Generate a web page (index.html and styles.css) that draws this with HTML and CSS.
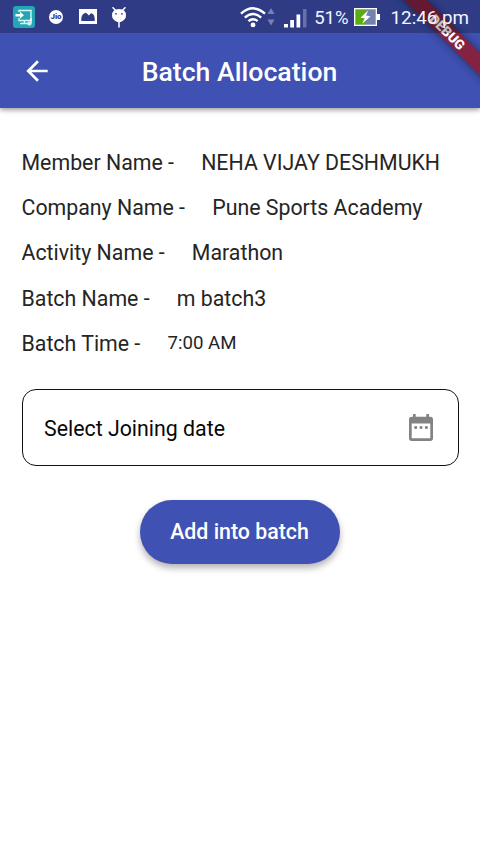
FILE: index.html
```html
<!DOCTYPE html>
<html lang="en">
<head>
<meta charset="utf-8">
<title>Batch Allocation</title>
<link rel="stylesheet" href="styles.css">
</head>
<body>
<div class="screen">
  <header class="appbar">
    <svg class="back" viewBox="0 0 24 24" width="32" height="32"><path fill="#fff" d="M20 11H7.83l5.59-5.59L12 4l-8 8 8 8 1.41-1.41L7.83 13H20z"/></svg>
    <h1 class="title">Batch Allocation</h1>
  </header>
  <main class="content">
    <dl class="details">
      <div class="row"><dt>Member Name -</dt><dd>NEHA VIJAY DESHMUKH</dd></div>
      <div class="row"><dt>Company Name -</dt><dd>Pune Sports Academy</dd></div>
      <div class="row"><dt>Activity Name -</dt><dd>Marathon</dd></div>
      <div class="row"><dt>Batch Name -</dt><dd>m batch3</dd></div>
      <div class="row"><dt>Batch Time -</dt><dd class="time">7:00 AM</dd></div>
    </dl>
    <div class="date-field">
      <span>Select Joining date</span>
      <svg viewBox="0 0 24 27" width="24" height="27"><path fill="#838383" fill-rule="evenodd" d="M4 0H6.7V2.7H17.3V0H20V2.7H21.3Q24 2.7 24 5.4V24.3Q24 27 21.3 27H2.7Q0 27 0 24.3V5.4Q0 2.7 2.7 2.7H4ZM2.7 9.6V24.3H21.3V9.6Z"/><path fill="#777" d="M5.3 12.3H8V14.8H5.3ZM10.7 12.3H13.3V14.8H10.7ZM16 12.3H18.7V14.8H16Z"/></svg>
    </div>
    <button class="submit" type="button">Add into batch</button>
  </main>
  <div class="banner">DEBUG</div>
  <div class="statusbar">
    <div class="notifications">
      <svg width="22" height="22" viewBox="0 0 22 22">
        <rect width="22" height="22" rx="3" fill="#25a6b5"/>
        <path d="M6 6V4.5H18V14.5H6V12M7 17.5H15M11.5 14.5V17.5" fill="none" stroke="#d4f7f8" stroke-width="1.4"/>
        <path d="M2.5 8H7V5.8L11 9.2L7 12.6V10.4H2.5Z" fill="#fff"/>
        <path d="M18 12V17.5" stroke="#fff" stroke-width="1.3"/><circle cx="16.4" cy="17.4" r="2.2" fill="#c8f2ef"/>
      </svg>
      <span class="jio">Jio</span>
      <svg width="18" height="15" viewBox="0 0 18 15"><path fill="#fff" fill-rule="evenodd" d="M0 0H18V15H0ZM2.3 12H15.7V9Q15.5 5.5 12.8 4.3Q11.5 4.3 9.8 6.5Q8 3.7 6 3.8Q3 5.2 2.3 9Z"/></svg>
      <svg class="android" width="16" height="21" viewBox="0 0 16 21"><path d="M2 .7L4.4 3.2M14 .7L11.6 3.2M8 14V20" stroke="#fff" stroke-width="1.5" stroke-linecap="round"/><path d="M1 8.5Q1 2 8 2T15 8.5Q15 12 11.2 14.2Q9.5 15.3 8 15.3T4.8 14.2Q1 12 1 8.5Z" fill="#fff"/><circle cx="5" cy="6.8" r=".9" fill="#2f3d88"/><circle cx="11" cy="6.8" r=".9" fill="#2f3d88"/></svg>
    </div>
    <div class="system">
      <svg class="wifi" width="26" height="22" viewBox="0 0 26 22"><g fill="none" stroke="#fff" stroke-width="2.4"><path d="M1 7.7Q13-3 25 7.7"/><path d="M4.8 11.6Q13 4.2 21.2 11.6"/><path d="M8.4 15.2Q13 11.2 17.6 15.2"/></g><circle cx="13" cy="18.9" r="2.4" fill="#fff"/></svg>
      <svg class="traffic" width="8" height="18" viewBox="0 0 8 18"><path fill="#7880b4" d="M.5 6L4 0L7.5 6ZM.5 11.5H7.5L4 17.5Z"/></svg>
      <svg class="signal" width="23" height="20" viewBox="0 0 23 20"><path fill="#fff" d="M0 16H4V19.5H0ZM6.2 12H10V19.5H6.2ZM12.5 6.5H16.2V19.5H12.5Z"/><path fill="#6871aa" d="M19 1H22.5V19.5H19Z"/></svg>
      <span class="percent">51%</span>
      <svg class="battery" width="26" height="18" viewBox="0 0 26 18"><path fill="#fff" d="M0 0H23V6H26V12H23V18H0Z"/><path fill="#59ad13" d="M1.3 1.3H12V16.7H1.3Z"/><path fill="#7482b0" d="M12 1.3H21.7V16.7H12Z"/><path fill="#fff" d="M14.2 2.2L6.5 9.8L10.7 10.3L8.2 15.8L16.5 8.2L12 7.5Z"/></svg>
      <span class="clock">12:46 pm</span>
    </div>
  </div>
</div>
</body>
</html>
```
FILE: styles.css
```css
* { box-sizing: border-box; }
body { margin: 0; font-family: Roboto, "Liberation Sans", sans-serif; }
.screen {
  position: relative;
  width: 480px;
  height: 853px;
  overflow: hidden;
  background: #fff;
}
.appbar {
  display: flex;
  align-items: center;
  height: 108px;
  padding: 34px 21px 0;
  background: #3f51b2;
  box-shadow: 0 2px 5px rgba(0, 0, 0, .4);
}
.back { flex: none; }
.title {
  flex: 1;
  margin: 2px 33px 0 0;
  color: #fff;
  font-size: 26.67px;
  font-weight: 500;
  text-align: center;
}
.content {
  display: flex;
  flex-direction: column;
  padding: 31.6px 21px 0;
}
.details { margin: 0 0 0 .5px; }
.row {
  display: flex;
  align-items: center;
  gap: 27.2px;
  height: 45.3px;
  color: #252525;
  font-size: 21.33px;
  white-space: nowrap;
}
.row dd { margin: 0; }
.row .time { font-size: 18.67px; }
.date-field {
  display: flex;
  align-items: center;
  justify-content: space-between;
  height: 77px;
  margin: 22.9px 0 0 .5px;
  padding: 0 25.5px 0 21.5px;
  border: 1.5px solid #111;
  border-radius: 14px;
  color: #080808;
  font-size: 21.33px;
}
.date-field span { padding-top: 2px; }
.submit {
  align-self: center;
  width: 200px;
  height: 64px;
  margin-top: 34px;
  padding: 0 1px 0 0;
  border: 0;
  border-radius: 32px;
  background: #3f51b2;
  box-shadow: 0 4px 7px rgba(0, 0, 0, .3);
  color: #fff;
  font: 500 21.33px Roboto, "Liberation Sans", sans-serif;
}
.banner {
  position: absolute;
  top: 23.5px;
  left: 377px;
  width: 141px;
  height: 16px;
  transform: rotate(45deg);
  background: rgba(146, 24, 42, .82);
  box-shadow: 0 0 8px rgba(0, 0, 0, .45);
  color: #fff;
  font-size: 13.6px;
  font-weight: 900;
  line-height: 16px;
  text-align: center;
}
.statusbar {
  position: absolute;
  inset: 0 0 auto;
  display: flex;
  justify-content: space-between;
  height: 33px;
  padding: 0 11px 0 13px;
  background: rgba(0, 0, 0, .25);
  color: #f4f5ff;
}
.notifications, .system { display: flex; align-items: center; }
.notifications { gap: 14px; }
.android { margin: 1px 0 0; }
.jio {
  width: 14px;
  height: 14px;
  margin-right: 2px;
  border-radius: 50%;
  background: #fff;
  color: #2f3d88;
  font-size: 8px;
  font-weight: 900;
  line-height: 14px;
  text-align: center;
}
.traffic { margin-left: 1px; }
.signal { margin: 3px 7px 0 9px; }
.percent { font-size: 18.5px; }
.battery { margin: 1px 11px 0 5px; }
.clock { font-size: 18.8px; }
.percent, .clock { padding-top: 2px; white-space: nowrap; }
```
